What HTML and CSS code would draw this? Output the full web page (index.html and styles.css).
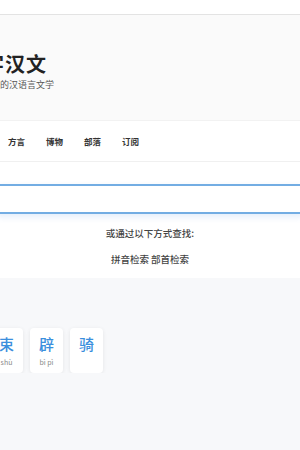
FILE: index.html
```html
<!DOCTYPE html>
<html lang="zh-CN">
<head>
    <meta charset="UTF-8">
    <meta name="viewport" content="width=device-width, initial-scale=1.0">
    <title>汉字汉文</title>
    <link rel="stylesheet" href="styles.css">
</head>
<body>
    <div class="topbar"></div>

    <header class="hero">
        <h1 class="site-title">字汉文</h1>
        <p class="site-sub">的汉语言文学</p>
    </header>

    <nav class="nav">
        <a href="#">方言</a>
        <a href="#">博物</a>
        <a href="#">部落</a>
        <a href="#">订阅</a>
    </nav>

    <section class="search">
        <input type="text" class="search-input">
        <p class="search-hint">或通过以下方式查找:</p>
        <p class="search-links"><a href="#">拼音检索</a> <a href="#">部首检索</a></p>
    </section>

    <section class="recent">
        <div class="card card-first">
            <div class="card-char">束</div>
            <div class="card-py">shù</div>
        </div>
        <div class="card">
            <div class="card-char">辟</div>
            <div class="card-py">bì pì</div>
        </div>
        <div class="card">
            <div class="card-char">骑</div>
            <div class="card-py"></div>
        </div>
    </section>
</body>
</html>
```

FILE: styles.css
```css
body {
    margin: 0;
    font-family: "Noto Sans CJK SC", "Noto Sans", sans-serif;
    background: #f7f8fa;
    color: #333;
    overflow: hidden;
}

.topbar {
    height: 14px;
    background: #fff;
    border-bottom: 1px solid #e3e3e3;
    box-shadow: 0 2px 4px rgba(0, 0, 0, 0.04);
}

.hero {
    background: #fafafa;
    height: 105px;
    padding-top: 35px;
    box-sizing: border-box;
}

.site-title {
    margin: 0 0 0 -16px;
    font-size: 20px;
    line-height: 28px;
    font-weight: bold;
    color: #222;
    letter-spacing: 1px;
}

.site-sub {
    margin: 0;
    font-size: 9px;
    line-height: 13px;
    color: #555;
}

.nav {
    background: #fff;
    height: 40px;
    border-top: 1px solid #f2f2f2;
    border-bottom: 1px solid #f0f0f0;
    display: flex;
    align-items: center;
    gap: 21px;
    padding-left: 8px;
}

.nav a {
    font-size: 8.5px;
    font-weight: bold;
    color: #333;
    text-decoration: none;
}

.search {
    background: #fff;
    padding: 22px 0 12px;
    text-align: center;
}

.search-input {
    display: block;
    width: calc(100% + 8px);
    margin: 0 -4px;
    height: 30px;
    box-sizing: border-box;
    border: 2px solid #73ade3;
    border-radius: 4px;
    box-shadow: 0 3px 6px rgba(74, 144, 226, 0.15);
    outline: none;
}

.search-hint {
    margin: 12px 0 0;
    font-size: 9.5px;
    line-height: 14px;
    font-weight: 500;
    color: #444;
}

.search-links {
    margin: 12px 0 0;
    font-size: 9.5px;
    line-height: 14px;
    font-weight: 500;
}

.search-links a {
    color: #444;
    text-decoration: none;
}

.recent {
    display: flex;
    gap: 7px;
    padding-top: 50px;
    margin-left: -10px;
}

.card {
    width: 33px;
    height: 45px;
    background: #fff;
    border-radius: 4px;
    box-shadow: 0 1px 4px rgba(0, 0, 0, 0.08);
    text-align: center;
    box-sizing: border-box;
    padding-top: 6px;
}

.card-char {
    font-size: 15px;
    line-height: 20px;
    font-weight: 500;
    color: #3b8fdd;
}

.card-py {
    font-size: 7px;
    line-height: 10px;
    margin-top: 3px;
    color: #888;
}
```
